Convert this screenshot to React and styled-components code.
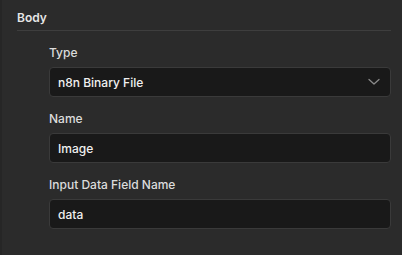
import styled, { createGlobalStyle } from 'styled-components'

const GlobalStyle = createGlobalStyle`
  html, body {
    margin: 0;
    padding: 0;
    background: #2b2b2b;
  }
  body {
    font-family: Inter, "Open Sans", sans-serif;
    -webkit-font-smoothing: antialiased;
  }
`

const Panel = styled.div`
  width: 402px;
  height: 255px;
  box-sizing: border-box;
  background: #2b2b2b;
  border-left: 2px solid #262626;
  padding: 10px 11px 0 15px;
`

const SectionTitle = styled.div`
  font-size: 12px;
  font-weight: 600;
  color: #e6e6e6;
  line-height: 16px;
  padding-bottom: 4px;
  border-bottom: 1px solid #3e3e3e;
`

const Fields = styled.div`
  display: flex;
  flex-direction: column;
  gap: 14px;
  padding: 14px 0 0 32px;
`

const Field = styled.div`
  display: flex;
  flex-direction: column;
  gap: 7px;
`

const Label = styled.label`
  font-size: 12px;
  font-weight: 500;
  color: #dcdcdc;
  line-height: 15px;
`

const Box = styled.div`
  height: 30px;
  box-sizing: border-box;
  display: flex;
  align-items: center;
  justify-content: space-between;
  padding: 0 10px 0 8px;
  background: #191919;
  border: 1px solid #3a3a3a;
  border-radius: 4px;
  font-size: 12px;
  font-weight: 500;
  color: #f0f0f0;
`

const Chevron = () => (
  <svg width="12" height="8" viewBox="0 0 12 8" fill="none">
    <path d="M1 1.5L6 6L11 1.5" stroke="#8a8a8a" strokeWidth="1.3" strokeLinecap="round" strokeLinejoin="round" />
  </svg>
)

export default function App() {
  return (
    <>
      <GlobalStyle />
      <Panel>
        <SectionTitle>Body</SectionTitle>
        <Fields>
          <Field>
            <Label>Type</Label>
            <Box>
              n8n Binary File
              <Chevron />
            </Box>
          </Field>
          <Field>
            <Label>Name</Label>
            <Box>Image</Box>
          </Field>
          <Field>
            <Label>Input Data Field Name</Label>
            <Box>data</Box>
          </Field>
        </Fields>
      </Panel>
    </>
  )
}
